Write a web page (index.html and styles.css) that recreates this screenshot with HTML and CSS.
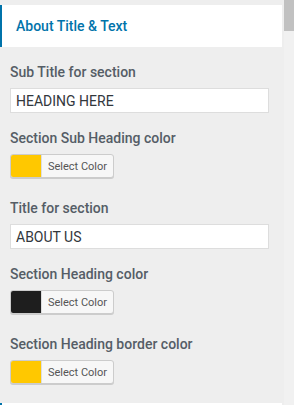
FILE: index.html
```html
<!DOCTYPE html>
<html lang="en">
<head>
  <meta charset="UTF-8" />
  <meta name="viewport" content="width=device-width, initial-scale=1.0"/>
  <title>Customizer - About</title>
  <link rel="stylesheet" href="styles.css">
</head>
<body>

<div class="panel">
  <div class="section-head">About Title &amp; Text</div>

  <ul class="controls">
    <li class="control control-text">
      <label>Sub Title for section</label>
      <input type="text" value="HEADING HERE">
    </li>

    <li class="control control-color">
      <label>Section Sub Heading color</label>
      <button class="color-btn"><span class="swatch yellow"></span><span class="color-label">Select Color</span></button>
    </li>

    <li class="control control-text">
      <label>Title for section</label>
      <input type="text" value="ABOUT US">
    </li>

    <li class="control control-color">
      <label>Section Heading color</label>
      <button class="color-btn"><span class="swatch dark"></span><span class="color-label">Select Color</span></button>
    </li>

    <li class="control control-color">
      <label>Section Heading border color</label>
      <button class="color-btn"><span class="swatch yellow"></span><span class="color-label">Select Color</span></button>
    </li>
  </ul>

  <div class="section-next"></div>
</div>

<div class="scrollbar">
  <div class="thumb"></div>
</div>

</body>
</html>
```

FILE: styles.css
```css
html {
  overflow: hidden;
}

body {
  font-family: Roboto, "Liberation Sans", sans-serif;
  margin: 0;
  padding: 0;
  background: #eeeeee;
  display: flex;
  height: 405px;
  overflow: hidden;
}

.panel {
  width: 282px;
  flex: none;
}

.section-head {
  margin-top: 5px;
  height: 42px;
  background: white;
  border-left: 2px solid #0073aa;
  padding-left: 14px;
  display: flex;
  align-items: center;
  color: #0073aa;
  font-size: 14px;
  font-weight: 500;
}

.controls {
  list-style: none;
  margin: 0;
  padding: 15px 13px 0 10px;
}

.control label {
  display: block;
  font-size: 14px;
  line-height: 20px;
  font-weight: 500;
  color: #555d66;
  margin-bottom: 6px;
}

.control-text {
  margin-bottom: 15px;
}

.control-color {
  margin-bottom: 20px;
}

.control input {
  box-sizing: border-box;
  width: 100%;
  height: 25px;
  margin: 0;
  padding: 0 5px;
  border: 1px solid #dddddd;
  background: white;
  font-family: inherit;
  font-size: 14px;
  color: #32373c;
  outline: none;
}

.color-btn {
  display: flex;
  align-items: stretch;
  box-sizing: border-box;
  width: 104px;
  height: 24px;
  padding: 0;
  margin: 0;
  border: 1px solid #cccccc;
  border-radius: 3px;
  background: #f7f7f7;
  box-shadow: 0 1px 0 #cccccc;
  overflow: hidden;
  font-family: inherit;
}

.swatch {
  width: 30px;
  flex: none;
}

.yellow {
  background: #ffc800;
}

.dark {
  background: #1e1e1e;
}

.color-label {
  flex: 1;
  display: flex;
  align-items: center;
  justify-content: center;
  font-size: 11px;
  color: #555555;
  border-left: 1px solid #dddddd;
}

.section-next {
  margin-top: -1px;
  height: 3px;
  background: white;
  border-left: 2px solid #0073aa;
}

.scrollbar {
  width: 10px;
  margin-left: 2px;
  background: #f1f1f1;
}

.thumb {
  height: 31px;
  background: #c1c1c1;
}
```
